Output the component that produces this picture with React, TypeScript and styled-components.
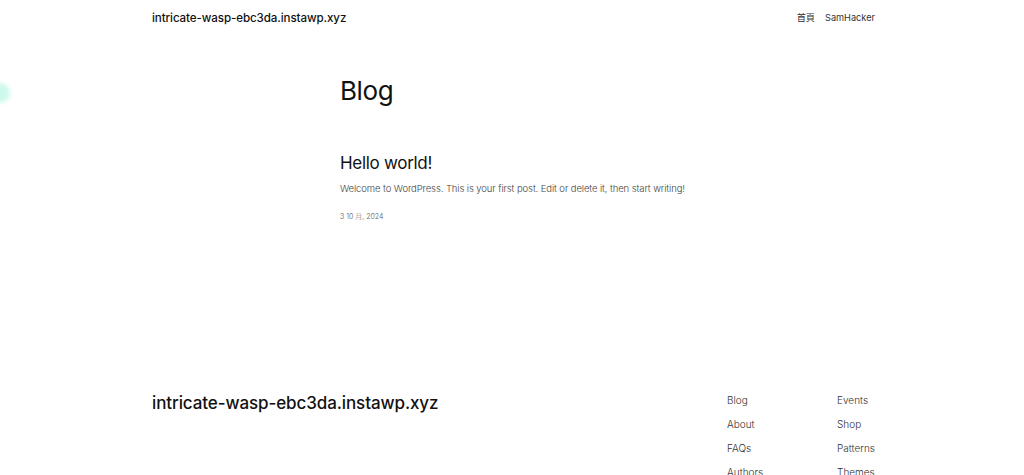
import React from "react";
import styled, { createGlobalStyle } from "styled-components";

const Global = createGlobalStyle`
  html, body { margin: 0; padding: 0; background: #ffffff; }
  body { font-family: Inter, "Noto Sans", "Noto Sans CJK TC", sans-serif; color: #111111; overflow: hidden; }
  a { color: inherit; text-decoration: none; }
`;

const Page = styled.div`
  position: relative;
  width: 1024px;
  height: 475px;
  overflow: hidden;
  display: flex;
  flex-direction: column;
`;

const Header = styled.header`
  display: flex;
  justify-content: space-between;
  align-items: center;
  padding: 7px 149px 0 152px;
  height: 21px;
  flex-shrink: 0;
`;

const SiteTitle = styled.a<{ $size: number }>`
  font-size: ${(p) => p.$size}px;
  font-weight: 500;
  color: #111111;
  letter-spacing: -0.1px;
`;

const Nav = styled.nav`
  display: flex;
  align-items: center;
  gap: 10px;
  font-size: 9.2px;
  line-height: 12px;
  color: #333333;
`;

const NavLink = styled.a`
  font-weight: 400;
`;

const Main = styled.main`
  padding: 45px 0 0 340px;
  height: 287px;
  flex-shrink: 0;
  box-sizing: border-box;
  display: flex;
  flex-direction: column;
`;

const PageTitle = styled.h1`
  margin: 0;
  font-size: 26px;
  font-weight: 400;
  line-height: 36px;
  color: #111111;
  letter-spacing: -0.4px;
`;

const PostTitle = styled.h2`
  margin: 41px 0 0;
  font-size: 17px;
  font-weight: 400;
  line-height: 26px;
  color: #111111;
  letter-spacing: -0.3px;
`;

const Excerpt = styled.p`
  margin: 6px 0 0;
  font-size: 9.5px;
  font-weight: 300;
  line-height: 14px;
  color: #444444;
  letter-spacing: -0.1px;
`;

const PostDate = styled.time`
  margin-top: 15px;
  font-size: 7px;
  color: #555555;
  font-weight: 300;
`;

const Footer = styled.footer`
  display: flex;
  justify-content: space-between;
  padding: 0 149px 0 152px;
  flex-shrink: 0;
`;

const FooterBrand = styled.div`
  padding-top: 78px;
`;

const FooterCols = styled.div`
  display: flex;
  padding-top: 78px;
`;

const FooterCol = styled.ul`
  list-style: none;
  margin: 0;
  padding: 0;
  width: 110px;
  display: flex;
  flex-direction: column;
  gap: 10px;
  &:last-child { width: auto; }
`;

const FooterLink = styled.li`
  font-size: 10px;
  line-height: 14px;
  font-weight: 300;
  color: #333333;
`;

const Orb = styled.div`
  position: absolute;
  left: -10px;
  top: 83px;
  width: 20px;
  height: 20px;
  border-radius: 50%;
  background: #cdf9ec;
  filter: blur(2px);
`;

export default function App() {
  return (
    <Page>
      <Global />
      <Orb />
      <Header>
        <SiteTitle $size={11.6}>intricate-wasp-ebc3da.instawp.xyz</SiteTitle>
        <Nav>
          <NavLink>首頁</NavLink>
          <NavLink>SamHacker</NavLink>
        </Nav>
      </Header>
      <Main>
        <PageTitle>Blog</PageTitle>
        <PostTitle>Hello world!</PostTitle>
        <Excerpt>Welcome to WordPress. This is your first post. Edit or delete it, then start writing!</Excerpt>
        <PostDate>3 10 月, 2024</PostDate>
      </Main>
      <Footer>
        <FooterBrand>
          <SiteTitle $size={17}>intricate-wasp-ebc3da.instawp.xyz</SiteTitle>
        </FooterBrand>
        <FooterCols>
          <FooterCol>
            <FooterLink>Blog</FooterLink>
            <FooterLink>About</FooterLink>
            <FooterLink>FAQs</FooterLink>
            <FooterLink>Authors</FooterLink>
          </FooterCol>
          <FooterCol>
            <FooterLink>Events</FooterLink>
            <FooterLink>Shop</FooterLink>
            <FooterLink>Patterns</FooterLink>
            <FooterLink>Themes</FooterLink>
          </FooterCol>
        </FooterCols>
      </Footer>
    </Page>
  );
}
